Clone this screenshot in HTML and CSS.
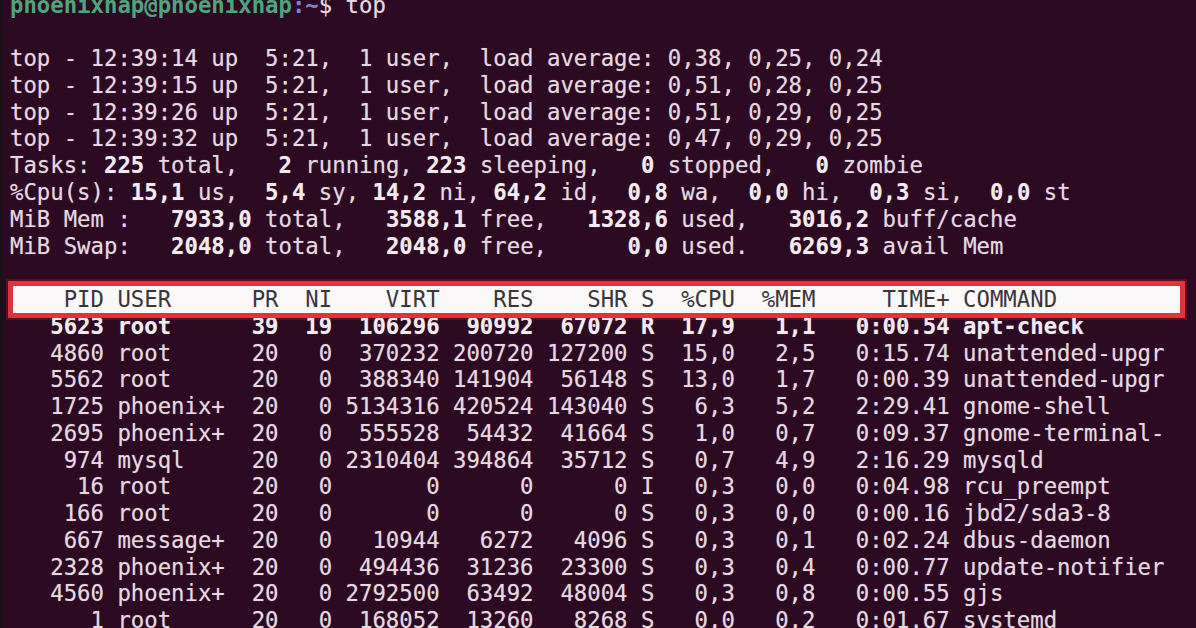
FILE: index.html
```html
<!DOCTYPE html>
<html lang="en">
<head>
<meta charset="utf-8">
<title>top</title>
<link rel="stylesheet" href="styles.css">
</head>
<body>
<div class="term">
<div class="ln prompt"><span class="host">phoenixnap@phoenixnap</span><span class="path">:~</span><span class="cmd">$ top</span></div>
<div class="ln"> </div>
<div class="ln">top - 12:39:14 up  5:21,  1 user,  load average: 0,38, 0,25, 0,24</div>
<div class="ln">top - 12:39:15 up  5:21,  1 user,  load average: 0,51, 0,28, 0,25</div>
<div class="ln">top - 12:39:26 up  5:21,  1 user,  load average: 0,51, 0,29, 0,25</div>
<div class="ln">top - 12:39:32 up  5:21,  1 user,  load average: 0,47, 0,29, 0,25</div>
<div class="ln">Tasks: <b>225</b> total,   <b>2</b> running, <b>223</b> sleeping,   <b>0</b> stopped,   <b>0</b> zombie</div>
<div class="ln">%Cpu(s): <b>15,1</b> us,  <b>5,4</b> sy, <b>14,2</b> ni, <b>64,2</b> id,  <b>0,8</b> wa,  <b>0,0</b> hi,  <b>0,3</b> si,  <b>0,0</b> st</div>
<div class="ln">MiB Mem :   <b>7933,0</b> total,   <b>3588,1</b> free,   <b>1328,6</b> used,   <b>3016,2</b> buff/cache</div>
<div class="ln">MiB Swap:   <b>2048,0</b> total,   <b>2048,0</b> free,      <b>0,0</b> used.   <b>6269,3</b> avail Mem</div>
<div class="ln"> </div>
<div class="ln hdr">    PID USER      PR  NI    VIRT    RES    SHR S  %CPU  %MEM     TIME+ COMMAND</div>
<div class="ln run">   5623 root      39  19  106296  90992  67072 R  17,9   1,1   0:00.54 apt-check</div>
<div class="ln">   4860 root      20   0  370232 200720 127200 S  15,0   2,5   0:15.74 unattended-upgr</div>
<div class="ln">   5562 root      20   0  388340 141904  56148 S  13,0   1,7   0:00.39 unattended-upgr</div>
<div class="ln">   1725 phoenix+  20   0 5134316 420524 143040 S   6,3   5,2   2:29.41 gnome-shell</div>
<div class="ln">   2695 phoenix+  20   0  555528  54432  41664 S   1,0   0,7   0:09.37 gnome-terminal-</div>
<div class="ln">    974 mysql     20   0 2310404 394864  35712 S   0,7   4,9   2:16.29 mysqld</div>
<div class="ln">     16 root      20   0       0      0      0 I   0,3   0,0   0:04.98 rcu_preempt</div>
<div class="ln">    166 root      20   0       0      0      0 S   0,3   0,0   0:00.16 jbd2/sda3-8</div>
<div class="ln">    667 message+  20   0   10944   6272   4096 S   0,3   0,1   0:02.24 dbus-daemon</div>
<div class="ln">   2328 phoenix+  20   0  494436  31236  23300 S   0,3   0,4   0:00.77 update-notifier</div>
<div class="ln">   4560 phoenix+  20   0 2792500  63492  48004 S   0,3   0,8   0:00.55 gjs</div>
<div class="ln">      1 root      20   0  168052  13260   8268 S   0,0   0,2   0:01.67 systemd</div>
</div>
</body>
</html>
```

FILE: styles.css
```css
html, body {
  margin: 0;
  padding: 0;
  background: #2c0a22;
  height: 100%;
  overflow: hidden;
}

body {
  border-left: 3px solid #1d1119;
  box-sizing: border-box;
}

.term {
  margin-top: -8.4px;
  padding: 0 8px 0 7px;
  font-family: "DejaVu Sans Mono", "Liberation Mono", monospace;
  font-size: 22.3px;
  line-height: 26.78px;
  color: #e4d9e0;
  text-shadow: 0 0 1px rgba(228, 217, 224, 0.45);
}

.ln {
  white-space: pre;
  height: 26.78px;
}

.ln b {
  font-weight: bold;
  color: #f2ecf0;
}

.prompt {
  font-weight: bold;
}

.host {
  color: #4fa57e;
  text-shadow: none;
}

.path {
  color: #7d86c4;
  text-shadow: none;
}

.cmd {
  color: #e4d9e0;
  font-weight: normal;
}

.hdr {
  background: #fbf8f9;
  color: #3a363a;
  text-shadow: none;
  margin: 0 8px 0 3px;
  text-indent: -3px;
  outline: 5px solid #e2323c;
  box-shadow: 0 0 0 7px rgba(140, 20, 40, 0.45);
}

.run {
  font-weight: bold;
  color: #f2ecf0;
}
```
